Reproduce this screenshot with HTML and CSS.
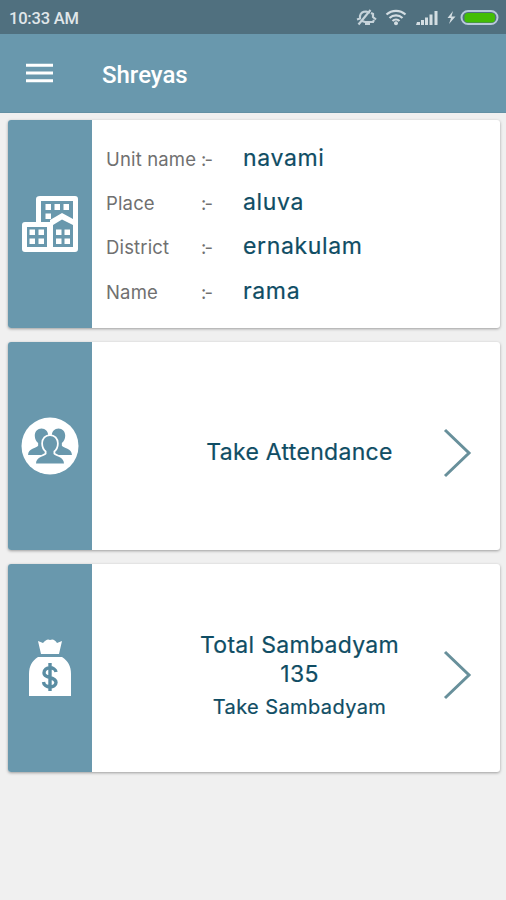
FILE: index.html
```
<!DOCTYPE html>
<html lang="en">
<head>
<meta charset="utf-8">
<title>Shreyas</title>
<link rel="stylesheet" href="styles.css">
</head>
<body>
<div class="status">
  <span class="time">10:33 AM</span>
  <svg class="status-icons" width="154" height="34" viewBox="0 0 154 34">
    <g fill="none" stroke="#c6d3da" stroke-width="2.200">
      <path d="M5 19.500l3-1V16q1-4.500 6-4.500l4 1M19 13l2 1v3l3 2.500M22 20l-1 2h-8l-3-1M13 24h5"/>
      <path d="M6.500 24.500L18.500 10"/>
      <path stroke="#d3dde2" d="M34.500 14.500a14 14 0 0 1 19 0M37.500 18a9.500 9.500 0 0 1 13 0M40.500 21a5 5 0 0 1 7 0"/>
    </g>
    <g fill="#d3dde2">
      <circle cx="44" cy="23.300" r="2"/>
      <path d="M65 22h3v3h-4zM69 20h3v5h-3zM73 17.500h3V25h-3zM77.500 14.500h3V25h-3zM82.500 11h3v14h-3z"/>
      <path d="M101 11l-5.500 7h3.500l-2 6 6.500-7.500h-4z"/>
    </g>
    <rect x="109.500" y="11" width="36" height="13" rx="6.500" fill="#50707f" stroke="#b9c9db" stroke-width="2"/>
    <rect x="112.500" y="13" width="30.500" height="9.500" rx="3.500" fill="#43bd05"/>
  </svg>
</div>
<header class="bar">
  <svg class="menu" width="27" height="20" viewBox="0 0 27 20"><path d="M0 2.200h27M0 10h27M0 17.800h27" stroke="#fff" stroke-width="3"/></svg>
  <h1 class="title">Shreyas</h1>
</header>
<main class="cards">
  <section class="card">
    <div class="side">
      <svg width="58" height="58" viewBox="0 0 58 58">
        <path fill="#fff" d="M19 1h35q3 0 3 3v50q0 3-3 3H4q-3 0-3-3V30q0-3 3-3h11V4q0-3 4-3z"/>
        <path fill="#6998ad" d="M20 6h32v18l-11-6-12 7v2h-9zM6 32h20v20H6zM32 30l9-5.500L52 30v22H32z"/>
        <g fill="#fff"><path d="M24.500 9h5.500v6h-5.500zM33.500 9h5.500v6h-5.500zM42.500 9h5.500v6h-5.500zM24.500 18.500h5.500v5.500h-5.500zM8.500 34.500h5.500v5.500h-5.500zM17.500 34.500h5.500v5.500h-5.500zM8.500 43.500h5.500v5.500h-5.500zM17.500 43.500h5.500v5.500h-5.500zM35 34.500h5.500v5.500h-5.500zM43.500 34.500h5.500v5.500h-5.500zM35 43.500h5.500v5.500h-5.500zM43.500 43.500h5.500v5.500h-5.500z"/></g>
      </svg>
    </div>
    <div class="details">
      <div class="row"><span class="label">Unit name</span><span class="sep">:-</span><span class="value">navami</span></div>
      <div class="row"><span class="label">Place</span><span class="sep">:-</span><span class="value">aluva</span></div>
      <div class="row"><span class="label">District</span><span class="sep">:-</span><span class="value">ernakulam</span></div>
      <div class="row"><span class="label">Name</span><span class="sep">:-</span><span class="value">rama</span></div>
    </div>
  </section>
  <section class="card">
    <div class="side">
      <svg width="58" height="58" viewBox="0 0 58 58">
        <defs><path id="person" d="M0-14c4 0 7 3 7 7.500 0 3.500-1.500 6-3.500 7.500v3c1.500 2.500 10.500 2.500 10.500 9.500h-28c0-7 9-7 10.500-9.500v-3c-2-1.500-3.500-4-3.500-7.500 0-4.500 3-7.500 7-7.500z"/></defs>
        <circle cx="29" cy="29" r="28.500" fill="#fff"/>
        <g fill="#6998ad">
          <use href="#person" transform="translate(20.500 25) scale(.96)"/>
          <use href="#person" transform="translate(37.500 25) scale(.96)"/>
          <use href="#person" x="29" y="33" stroke="#fff" stroke-width="3.500" paint-order="stroke"/>
        </g>
      </svg>
    </div>
    <div class="action"><p class="main">Take Attendance</p></div>
    <svg class="arrow" width="30" height="50" viewBox="0 0 30 50"><path d="M2 2l24 23L2 48" fill="none" stroke="#68909b" stroke-width="3"/></svg>
  </section>
  <section class="card">
    <div class="side">
      <svg width="58" height="58" viewBox="0 0 58 58">
        <path fill="#fff" d="M17 2l5 2q4-5 7-3 4-2 7 3l5-2-3 13H20zM17 18h24c6 4 9 9 9 17v22H8V35c0-8 3-13 9-17z"/>
        <path d="M35 33c-.5-5.500-12-6-12 1 0 6 12 3 12 9.500 0 6-12 6-12.500-.5M29 24v28" fill="none" stroke="#5a8da3" stroke-width="3.400"/>
      </svg>
    </div>
    <div class="action">
      <p class="main total">Total Sambadyam</p>
      <p class="main amount">135</p>
      <p class="sub">Take Sambadyam</p>
    </div>
    <svg class="arrow" width="30" height="50" viewBox="0 0 30 50"><path d="M2 2l24 23L2 48" fill="none" stroke="#68909b" stroke-width="3"/></svg>
  </section>
</main>
</body>
</html>
```
FILE: styles.css
```
* { box-sizing: border-box; }
body { margin: 0; min-height: 900px; background: #f0f0f0; font-family: Inter, "Liberation Sans", sans-serif; }
h1, p { margin: 0; }
.status { height: 34px; background: #50707f; display: flex; justify-content: space-between; padding: 0 0 0 9px; }
.time { font: 500 16.5px/37px Roboto, sans-serif; color: #e0e7ea; letter-spacing: -.2px; }
.bar { height: 79px; background: #6998ad; border-bottom: 1px solid #6390a4; display: flex; align-items: center; padding-left: 26px; gap: 49px; }
.title { font: 500 24px/30px Roboto, sans-serif; color: #fff; padding-top: 3px; }
.cards { padding: 7px 6px 0 8px; display: flex; flex-direction: column; gap: 14px; }
.card { height: 208px; display: flex; background: #fff; border-radius: 3px; box-shadow: 0 1px 3px rgba(0,0,0,.35); }
.side { width: 84px; flex: none; background: #6998ad; border-radius: 3px 0 0 3px; display: flex; align-items: center; justify-content: center; }
.details { padding: 16px 0 0 14px; }
.row { display: grid; grid-template-columns: 95px 42px auto; height: 44.200px; line-height: 44px; align-items: baseline; white-space: nowrap; }
.label, .sep { font-size: 18.500px; font-weight: 400; color: #707070; letter-spacing: .15px; }
.sep { letter-spacing: -1.800px; }
.value { font-size: 23px; font-weight: 400; color: #0f4d64; letter-spacing: .650px; -webkit-text-stroke: .2px #0f4d64; }
.action { flex: 1; display: flex; flex-direction: column; justify-content: center; align-items: center; padding-left: 64px; padding-top: 13px; color: #0f4d64; -webkit-text-stroke: .2px #0f4d64; }
.main { font-size: 23px; line-height: 29px; letter-spacing: .3px; }
.sub { font-size: 20px; line-height: 28px; padding-top: 4px; letter-spacing: .4px; }
.total { margin-top: 2px; }
.arrow { flex: none; align-self: center; margin: 13px 27px 0 0; }
```
